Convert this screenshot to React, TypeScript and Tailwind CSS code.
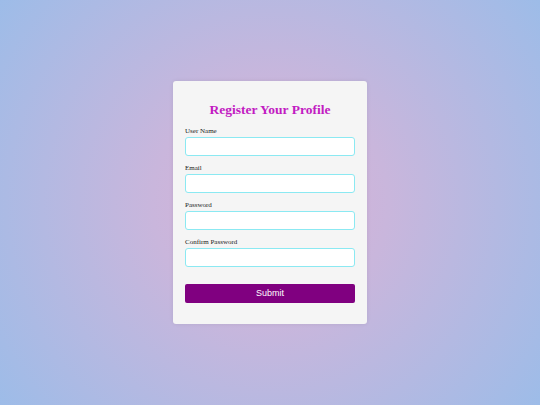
import React from 'react';

const fields = ['User Name', 'Email', 'Password', 'Confirm Password'];

export default function App() {
  return (
    <div className="min-h-[405px] w-full flex items-center justify-center bg-[radial-gradient(circle_at_center,#dab2d6_0%,#c9b6dc_35%,#9dbce8_100%)]">
      <div className="w-[194px] rounded-[3px] bg-[#f5f5f5] pt-[19px] px-[12px] pb-[21px] shadow-[0_0_4px_rgba(0,0,0,0.08)]">
        <h1 className="text-center text-[13.5px] leading-[19px] font-bold text-[#c21bc2] mb-[8px]" style={{ fontFamily: '"Liberation Serif", serif' }}>
          Register Your Profile
        </h1>
        {fields.map((f) => (
          <div key={f} className="mb-[8px] last:mb-0">
            <label className="block text-[7px] leading-[9px] text-[#222] mb-[1px]" style={{ fontFamily: '"Liberation Serif", serif' }}>
              {f}
            </label>
            <input
              type={f.includes('Password') ? 'password' : 'text'}
              className="block w-full h-[19px] rounded-[3px] bg-white border border-[#8be9f2] outline-none"
            />
          </div>
        ))}
        <button
          className="mt-[17px] w-full h-[19px] rounded-[2px] bg-[#800080] text-white text-[9px] flex items-center justify-center"
          style={{ fontFamily: '"Liberation Sans", Arial, sans-serif' }}
        >
          Submit
        </button>
      </div>
    </div>
  );
}
